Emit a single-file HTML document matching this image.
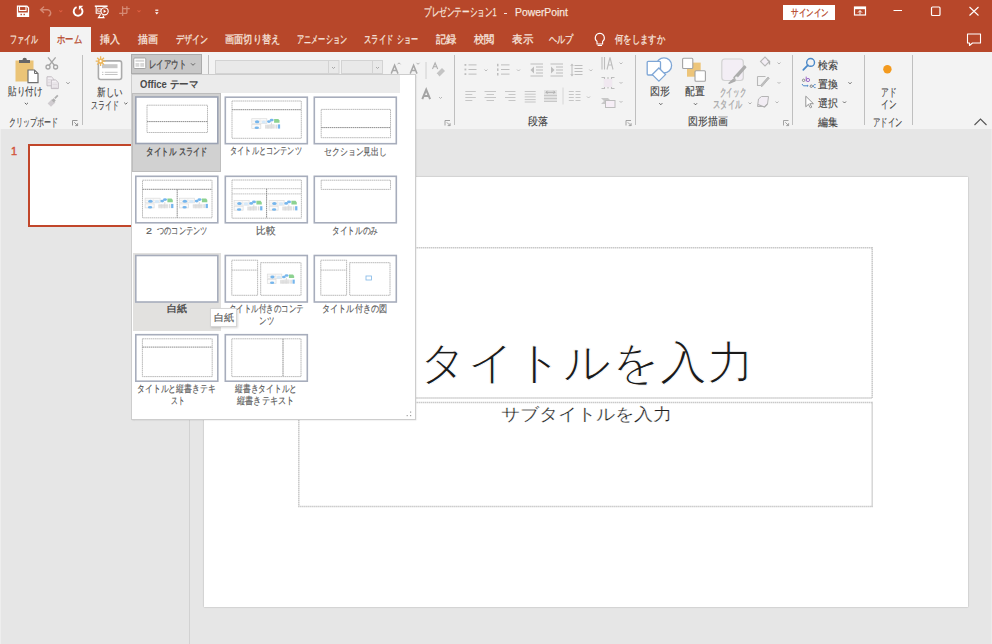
<!DOCTYPE html>
<html><head><meta charset="utf-8">
<style>
*{box-sizing:border-box;margin:0;padding:0}
html,body{width:992px;height:644px;overflow:hidden;background:#E6E6E6;font-family:"Liberation Sans",sans-serif;position:relative}
.a{position:absolute}
.t{position:absolute;white-space:nowrap;line-height:1;transform-origin:0 0}
svg{position:absolute;overflow:visible}
.tab{color:#F6E3DD;font-size:11px;top:33.5px;-webkit-text-stroke-width:0.3px}
.sep{position:absolute;width:1px;background:#BFBFBF}
.rt{color:#404040;font-size:10.5px;-webkit-text-stroke-width:0.12px}
.dis{color:#A8A8A8;-webkit-text-stroke-width:0.3px}
.frame{position:absolute;width:83px;height:47px;border:2px solid #AEB4C2;background:#fff}
.dot{position:absolute;border:1px dotted #8A8A8A}
.lbl{color:#5A5A5A;font-size:9.6px;-webkit-text-stroke-width:0.15px}
</style></head><body>
<!-- ========== TITLE BAR ========== -->
<div class="a" style="left:0;top:0;width:992px;height:52px;background:#B7472A"></div>

<!-- QAT icons -->
<svg style="left:0;top:0" width="180" height="26">
  <!-- save -->
  <path d="M17.5 6.2h9.5l1.5 1.5v8.6h-11z" fill="none" stroke="#fff" stroke-width="1.3"/>
  <rect x="19.5" y="6.5" width="6.5" height="4" fill="none" stroke="#fff" stroke-width="1.1"/>
  <rect x="17.5" y="12.5" width="11" height="4" fill="#fff"/>
  <rect x="20.5" y="13.8" width="1.4" height="1.4" fill="#B7472A"/><rect x="23.5" y="13.8" width="1.4" height="1.4" fill="#B7472A"/>
  <!-- undo faded -->
  <path d="M43.6 7l-3 2.8 3 2.8M40.8 9.8h7a3.2 3.2 0 0 1 1.2 6" fill="none" stroke="#D58A74" stroke-width="1.4" stroke-linecap="round"/>
  <path d="M59.3 10.3l1.5 1.5 1.5-1.5" fill="none" stroke="#DE5E40" stroke-width="1.1"/>
  <!-- repeat -->
  <path d="M76.6 7.2A4.4 4.4 0 1 0 81.2 8.2" fill="none" stroke="#fff" stroke-width="1.9"/>
  <path d="M78.9 5.8h4.4l-4.4 4.2z" fill="#fff"/>
  <!-- present -->
  <path d="M94.8 6.2h12.8" stroke="#fff" stroke-width="1.5"/>
  <path d="M96.2 6.8v6.4h4.5" fill="none" stroke="#fff" stroke-width="1.1"/>
  <rect x="97.8" y="8.8" width="3.2" height="2.4" fill="none" stroke="#fff" stroke-width="0.8"/>
  <circle cx="104.6" cy="11.3" r="3.6" fill="#B7472A" stroke="#fff" stroke-width="1.1"/>
  <path d="M103.6 9.6v3.4l2.6-1.7z" fill="#fff"/>
  <path d="M100.6 14.2l-2.2 3.4h5.6l-1.2-2.2" fill="none" stroke="#fff" stroke-width="1.1"/>
  <!-- touch faded -->
  <path d="M122.6 8.6h7.2M122.6 6.2v9.8M126.9 6.2v7.1M119.2 13.3h7.7" stroke="#D58A74" stroke-width="1.3" fill="none"/>
  <path d="M137.5 10.3l1.5 1.5 1.5-1.5" fill="none" stroke="#DE5E40" stroke-width="1.1"/>
  <!-- customize -->
  <path d="M155.3 10.2h3" stroke="#fff" stroke-width="1.2"/>
  <path d="M155 12.3h3.6l-1.8 2.2z" fill="#fff"/>
</svg>

<div class="t f" style="transform:scaleX(0.6337066375);left:424px;top:7px;font-size:11.5px;color:#F6E4DE;-webkit-text-stroke-width:0.25px">プレゼンテーション1</div>
<div class="a" style="left:503.8px;top:12.6px;width:3px;height:1.1px;background:#F6E4DE"></div>
<div class="t f" style="transform:scaleX(0.9011689692);left:514.5px;top:7.3px;font-size:11.5px;color:#F6E4DE;-webkit-text-stroke-width:0.25px">PowerPoint</div>

<!-- sign in -->
<div class="a" style="left:783px;top:5px;width:52px;height:15px;background:#fff"></div>
<div class="t f" style="transform:scaleX(0.7500000000);left:790.5px;top:8px;font-size:9.5px;color:#B7472A;-webkit-text-stroke-width:0.3px">サインイン</div>

<!-- window controls -->
<svg style="left:840px;top:0" width="152" height="52">
  <rect x="14.5" y="7" width="11" height="8" fill="none" stroke="#fff" stroke-width="1.2"/>
  <rect x="14.5" y="7" width="11" height="2.2" fill="#fff"/>
  <path d="M18 12.6l2-2 2 2M20 10.6v4" fill="none" stroke="#fff" stroke-width="1"/>
  <path d="M53.5 10.5h8.5" stroke="#fff" stroke-width="1"/>
  <rect x="91.5" y="7" width="8.5" height="8.5" rx="1" fill="none" stroke="#fff" stroke-width="1.2"/>
  <path d="M129.5 7l9 8.5M138.5 7l-9 8.5" stroke="#fff" stroke-width="1.1"/>
  <!-- comment -->
  <path d="M127.5 34h13v9h-8l-3 2.5v-2.5h-2z" fill="none" stroke="#fff" stroke-width="1.1" stroke-linejoin="round"/>
</svg>

<!-- tabs -->
<div class="a" style="left:50px;top:27px;width:41px;height:25px;background:#F3F3F3"></div>
<div class="t f tab" style="transform:scaleX(0.6363636364);left:10px">ファイル</div>
<div class="t f tab" style="transform:scaleX(0.7575757576);left:57px;color:#B7472A">ホーム</div>
<div class="t f tab" style="transform:scaleX(0.9090909091);left:100px">挿入</div>
<div class="t f tab" style="transform:scaleX(0.9090909091);left:138px">描画</div>
<div class="t f tab" style="transform:scaleX(0.7272727273);left:175.5px">デザイン</div>
<div class="t f tab" style="transform:scaleX(0.8333333333);left:225px">画面切り替え</div>
<div class="t f tab" style="transform:scaleX(0.6493506494);left:296.5px">アニメーション</div>
<div class="t f tab" style="transform:scaleX(0.6704545455);left:364px">スライド</div><div class="t f tab" style="transform:scaleX(0.6363636364);left:396.5px">ショー</div>
<div class="t f tab" style="transform:scaleX(0.9318181818);left:435.5px">記録</div>
<div class="t f tab" style="transform:scaleX(0.9318181818);left:473.5px">校閲</div>
<div class="t f tab" style="transform:scaleX(0.9545454545);left:511.5px">表示</div>
<div class="t f tab" style="transform:scaleX(0.7424242424);left:549px">ヘルプ</div>
<svg style="left:590px;top:30px" width="20" height="20">
  <path d="M9.8 3.2a4.6 4.6 0 0 0-2.8 8.2v2.6h5.6v-2.6a4.6 4.6 0 0 0-2.8-8.2z" fill="none" stroke="#fff" stroke-width="1.1"/>
  <path d="M7.6 15.5h4.4" stroke="#fff" stroke-width="1"/>
</svg>
<div class="t f tab" style="transform:scaleX(0.7575757576);left:615px">何をしますか</div>

<!-- ========== RIBBON ========== -->
<div class="a" style="left:0;top:52px;width:992px;height:77px;background:#F3F3F3"></div>

<!-- separators -->
<div class="sep" style="left:81.5px;top:55px;height:70px"></div>
<div class="sep" style="left:208px;top:55px;height:70px"></div>
<div class="sep" style="left:453.5px;top:55px;height:70px"></div>
<div class="sep" style="left:634.5px;top:55px;height:70px"></div>
<div class="sep" style="left:792px;top:55px;height:70px"></div>
<div class="sep" style="left:863.5px;top:55px;height:70px"></div>
<div class="sep" style="left:911.5px;top:55px;height:70px"></div>

<svg style="left:0;top:52px" width="992" height="77">
<g transform="translate(0,-52)">
  <!-- clipboard -->
  <rect x="15.5" y="60.5" width="18" height="21" fill="#EBC477"/>
  <path d="M19 63v-3h3.5a2.2 2.2 0 0 1 4.4 0h3.1v3z" fill="#666"/>
  <path d="M28 70h6.5l3.5 3.5v9.2h-10z" fill="#fff" stroke="#707070" stroke-width="1.2"/>
  <path d="M34.5 70v3.5h3.5" fill="none" stroke="#707070" stroke-width="1"/>
  <!-- scissors -->
  <g stroke="#A6A6A6" stroke-width="1.3" fill="none">
    <path d="M48 57.3l6.6 8.2M55.6 57.3l-6.6 8.2"/>
    <circle cx="48" cy="67" r="2"/><circle cx="55.6" cy="67" r="2"/>
  </g>
  <!-- copy -->
  <g stroke="#BCB6BC" stroke-width="0.9" fill="#F4F0F4">
    <path d="M47 76.8h4.4l2.4 2.4v6.6h-6.8z"/>
    <path d="M51.3 80h4.4l2.6 2.6v6h-7z"/>
  </g>
  <g stroke="#D2CCD2" stroke-width="0.6">
    <path d="M48 79.5h3.5M48 81h2.5M48 82.5h2.5M48 84h2.5M52.3 83h5M52.3 84.5h5M52.3 86h5M52.3 87.5h5"/>
  </g>
  <path d="M66.3 82.2l1.7 1.7 1.7-1.7" fill="none" stroke="#9A9A9A" stroke-width="1"/>
  <!-- painter -->
  <path d="M47.6 103.4l4.4-4.4 3.4 3.4-4.4 4.4z" fill="#D0CCD0"/>
  <path d="M51.6 100.2l2-2 2.2 2.2-2 2z" fill="#AFAFAF"/>
  <path d="M54.8 98.4l3-3" stroke="#AFAFAF" stroke-width="1.8"/>
  <!-- paste caret -->
  <path d="M24.8 102.8l1.6 1.6 1.6-1.6" fill="none" stroke="#666" stroke-width="1"/>
  <!-- launcher -->
  <g stroke="#8A8A8A" stroke-width="0.9" fill="none">
    <path d="M72.5 125.5v-5h5"/><path d="M74.3 122.3l3.3 3.3M77.6 123.2v2.4h-2.4"/>
  </g>

  <!-- new slide -->
  <rect x="98.4" y="60.9" width="23.2" height="18.6" rx="2.2" fill="#fff" stroke="#ABABAB" stroke-width="1.6"/>
  <rect x="102" y="64.2" width="15.5" height="4" fill="#C8C8C8"/>
  <path d="M102 72.3h1.4M104.8 72.3h12.8M102 74.5h1.4M104.8 74.5h12.8" stroke="#C4C4C4" stroke-width="1"/>
  <g stroke="#EDB75C" stroke-width="1.3">
    <path d="M100.6 56.3v9.8M95.7 61.2h9.8M97.2 57.8l6.8 6.8M104 57.8l-6.8 6.8"/>
  </g>
  <circle cx="100.6" cy="61.2" r="2.6" fill="#EDB75C"/>
  <circle cx="100.6" cy="61.2" r="1.1" fill="#fff"/>
  <path d="M124.2 102.6l1.6 1.6 1.6-1.6" fill="none" stroke="#666" stroke-width="1"/>

  <!-- font boxes -->
  <rect x="215.5" y="60.5" width="123.5" height="13" fill="#E9E9E9" stroke="#D3D3D3"/>
  <path d="M328.5 60.5v13" stroke="#D3D3D3"/>
  <path d="M332 67l1.5 1.5 1.5-1.5" fill="none" stroke="#A0A0A0" stroke-width="0.9"/>
  <rect x="341.5" y="60.5" width="41" height="13" fill="#E9E9E9" stroke="#D3D3D3"/>
  <path d="M372.5 60.5v13" stroke="#D3D3D3"/>
  <path d="M376 67l1.5 1.5 1.5-1.5" fill="none" stroke="#A0A0A0" stroke-width="0.9"/>
  <!-- grow/shrink A -->
  <g fill="none" stroke="#A8A8A8" stroke-width="1.5">
    <path d="M391.2 73.6l3.4-8.4 3.4 8.4M392.6 70.6h4"/>
    <path d="M410.2 73.6l3.4-8.4 3.4 8.4M411.6 70.6h4"/>
  </g>
  <path d="M397.5 64.3l1.5-1.5 1.5 1.5" fill="none" stroke="#A8A8A8" stroke-width="0.9"/>
  <path d="M416.5 62.8l1.5 1.5 1.5-1.5" fill="none" stroke="#A8A8A8" stroke-width="0.9"/>
  <path d="M426 62v17" stroke="#D0D0D0"/>
  <!-- clear formatting -->
  <path d="M432.5 69l2.6-6 2.6 6M433.5 66.8h3.2" fill="none" stroke="#B0B0B0" stroke-width="1.1"/>
  <path d="M436.5 73.5l5.5-5.5 3 3-5.5 5.5z" fill="#C4C4C4"/><path d="M436.5 73.5l2 2" stroke="#F3F3F3" stroke-width="0.8"/>
  <!-- font color A -->
  <path d="M422.3 99.2l3.9-9.6 3.9 9.6M423.6 96h5.2" fill="none" stroke="#A4A4A4" stroke-width="2"/>
  <path d="M439 97l1.5 1.5 1.5-1.5" fill="none" stroke="#B0B0B0" stroke-width="0.9"/>
  <g stroke="#9A9A9A" stroke-width="0.9" fill="none">
    <path d="M445 125.5v-5h5"/><path d="M446.8 122.3l3.3 3.3M450.1 123.2v2.4h-2.4"/>
  </g>

  <!-- paragraph -->
  <g fill="#BDBDBD">
    <rect x="464.5" y="64" width="1.8" height="1.8"/><rect x="464.5" y="68.6" width="1.8" height="1.8"/><rect x="464.5" y="73.2" width="1.8" height="1.8"/>
    <rect x="468.5" y="64.4" width="8" height="1"/><rect x="468.5" y="69" width="8" height="1"/><rect x="468.5" y="73.6" width="8" height="1"/>
    <rect x="497" y="63.8" width="1.5" height="2.5"/><rect x="497" y="68.4" width="1.5" height="2.5"/><rect x="497" y="73" width="1.5" height="2.5"/>
    <rect x="501" y="64.4" width="8.5" height="1"/><rect x="501" y="69" width="8.5" height="1"/><rect x="501" y="73.6" width="8.5" height="1"/>
  </g>
  <g fill="none" stroke="#BDBDBD" stroke-width="1">
    <path d="M484.5 69.5l1.5 1.5 1.5-1.5M517 69.5l1.5 1.5 1.5-1.5M589.3 69.5l1.5 1.5 1.5-1.5"/>
    <path d="M619.5 62.5l1.5 1.5 1.5-1.5M619.5 82l1.5 1.5 1.5-1.5M619.5 101l1.5 1.5 1.5-1.5"/>
    <path d="M587 96.5l1.5 1.5 1.5-1.5"/>
  </g>
  <!-- indents -->
  <g fill="#BDBDBD">
    <rect x="530.5" y="63.5" width="12.5" height="1"/><rect x="536" y="66.5" width="7" height="1"/><rect x="536" y="69.5" width="7" height="1"/><rect x="536" y="72.5" width="7" height="1"/><rect x="530.5" y="75.5" width="12.5" height="1"/>
    <path d="M530.5 70l3.5-3.5v7z"/>
    <rect x="550.5" y="63.5" width="12.5" height="1"/><rect x="556" y="66.5" width="7" height="1"/><rect x="556" y="69.5" width="7" height="1"/><rect x="556" y="72.5" width="7" height="1"/><rect x="550.5" y="75.5" width="12.5" height="1"/>
    <path d="M554.5 70l-3.5-3.5v7z"/>
    <rect x="574.5" y="65" width="8" height="1"/><rect x="574.5" y="68" width="8" height="1"/><rect x="574.5" y="71" width="8" height="1"/><rect x="574.5" y="74" width="8" height="1"/>
    <path d="M572 63.5l-1.8 2.3h3.6zM572 76.5l-1.8-2.3h3.6z"/><rect x="571.5" y="65.5" width="1" height="9"/>
  </g>
  <!-- align row -->
  <g fill="#C6C6C6">
    <rect x="465.3" y="91" width="10.5" height="1"/><rect x="465.3" y="94" width="7" height="1"/><rect x="465.3" y="97" width="10.5" height="1"/><rect x="465.3" y="100" width="7" height="1"/>
    <rect x="484.5" y="91" width="11.5" height="1"/><rect x="486.5" y="94" width="7.5" height="1"/><rect x="484.5" y="97" width="11.5" height="1"/><rect x="486.5" y="100" width="7.5" height="1"/>
    <rect x="505" y="91" width="10.5" height="1"/><rect x="508.5" y="94" width="7" height="1"/><rect x="505" y="97" width="10.5" height="1"/><rect x="508.5" y="100" width="7" height="1"/>
    <rect x="524.7" y="91" width="11" height="1"/><rect x="524.7" y="93.7" width="11" height="1"/><rect x="524.7" y="96.4" width="11" height="1"/><rect x="524.7" y="99.1" width="11" height="1"/><rect x="524.7" y="101.5" width="11" height="1"/>
    <rect x="544" y="90" width="13" height="12" fill="#E2E2E2"/><rect x="544" y="95" width="13" height="1" fill="#C8C8C8"/><rect x="544" y="98" width="13" height="1" fill="#C8C8C8"/><rect x="544" y="101" width="13" height="1" fill="#C8C8C8"/>
    <rect x="568.8" y="91" width="5" height="1"/><rect x="575.5" y="91" width="5" height="1"/><rect x="568.8" y="94" width="5" height="1"/><rect x="575.5" y="94" width="5" height="1"/><rect x="568.8" y="97" width="5" height="1"/><rect x="575.5" y="97" width="5" height="1"/><rect x="568.8" y="100" width="5" height="1"/><rect x="575.5" y="100" width="5" height="1"/>
  </g>
  <path d="M546 92.3h9M546 92.3l1.5-1.5M546 92.3l1.5 1.5M555 92.3l-1.5-1.5M555 92.3l-1.5 1.5" stroke="#A8A8A8" stroke-width="0.9" fill="none"/>
  <path d="M563 87.5v17" stroke="#D6D6D6"/>
  <!-- right column -->
  <g fill="none" stroke="#BDBDBD" stroke-width="1.1">
    <path d="M602 57v12.5M604.5 57v12.5M607 69.5l3-12 3 12M608 65h4"/>
    <path d="M601.5 77.5h3v11h-3M614.5 77.5h-3v11h3"/>
    <path d="M608 77v11.5"/>
  </g>
  <rect x="604" y="79" width="8" height="8" fill="#F0E8F0"/>
  <path d="M601 98h7l3 3-3 3h-7l3-3z" fill="#C8C8C8"/>
  <rect x="605.5" y="100.5" width="9.5" height="7" fill="#F6EEF6" stroke="#BDBDBD"/>
  <g stroke="#9A9A9A" stroke-width="0.9" fill="none">
    <path d="M626 125.5v-5h5"/><path d="M627.8 122.3l3.3 3.3M631.1 123.2v2.4h-2.4"/>
  </g>

  <!-- drawing: shapes -->
  <g fill="#fff" stroke="#7EA6D6" stroke-width="1.3">
    <circle cx="664" cy="65.4" r="7.6"/>
    <rect x="647.2" y="61.3" width="13.3" height="13.7" rx="1"/>
    <path d="M658.9 68l6.6 6.6-6.6 6.6-6.6-6.6z"/>
  </g>
  <path d="M659.3 103.2l1.5 1.5 1.5-1.5" fill="none" stroke="#555" stroke-width="1"/>
  <!-- arrange -->
  <rect x="687" y="62.6" width="13.7" height="14.1" fill="#EDC57A"/>
  <rect x="682.6" y="58.3" width="10.2" height="10.2" rx="1" fill="#fff" stroke="#A2A2A2" stroke-width="1.1"/>
  <rect x="695" y="70.8" width="10.4" height="10.4" rx="1" fill="#fff" stroke="#A2A2A2" stroke-width="1.1"/>
  <path d="M694 103.3l1.5 1.5 1.5-1.5" fill="none" stroke="#555" stroke-width="1"/>
  <!-- quick styles -->
  <rect x="721.8" y="59" width="21.5" height="21.5" rx="3" fill="#F3EEF5" stroke="#D2D2D2" stroke-width="1.2"/>
  <path d="M729 83.2l4.5-4 1.5 1.5zM734 77.5l10.5-11.5 1.2 1.2-10.2 11.8z" fill="#ADADAD" stroke="#ADADAD" stroke-width="1.5" stroke-linejoin="round"/>
  <circle cx="736.5" cy="78" r="1.4" fill="#F3F3F3"/>
  <path d="M748.5 102.5l1.5 1.5 1.5-1.5" fill="none" stroke="#B0B0B0" stroke-width="1"/>
  <!-- fill/outline/effects -->
  <path d="M760.5 61.5l4.5-4.5 4.5 4.5-4.5 4.5z" fill="#F3EEF5" stroke="#B8B8B8" stroke-width="1.1"/>
  <path d="M767.5 60l2 1.5v3" fill="none" stroke="#B0B0B0" stroke-width="1.3"/>
  <path d="M757.5 76.5h8M757.5 76.5v9h3" fill="none" stroke="#B8B8B8" stroke-width="1.1"/>
  <path d="M760.5 85.5l7.5-8.5 1.3 1.2-7.5 8.5z" fill="#C0C0C0" stroke="#B0B0B0" stroke-width="0.8"/>
  <path d="M758.5 99l3-2.5h7l-1 7.5-3 2.5h-7z" fill="#F2EDF4" stroke="#B4B4B4" stroke-width="1"/>
  <path d="M758 104.5l6.5 2.5 3-3" fill="none" stroke="#B0B0B0" stroke-width="1.2"/>
  <g fill="none" stroke="#B8B8B8" stroke-width="1">
    <path d="M777.5 62.5l1.5 1.5 1.5-1.5M777.5 82l1.5 1.5 1.5-1.5M775.5 101.5l1.5 1.5 1.5-1.5"/>
  </g>
  <g stroke="#9A9A9A" stroke-width="0.9" fill="none">
    <path d="M783.5 125.5v-5h5"/><path d="M785.3 122.3l3.3 3.3M788.6 123.2v2.4h-2.4"/>
  </g>

  <!-- editing -->
  <circle cx="810.6" cy="62.4" r="3.9" fill="none" stroke="#4A88C8" stroke-width="1.4"/>
  <path d="M807.9 65.2l-4.6 4.6" stroke="#4A88C8" stroke-width="1.7" stroke-linecap="round"/>
  <circle cx="803.6" cy="80.3" r="1.2" fill="none" stroke="#777" stroke-width="0.8"/>
  <path d="M806.2 76.6v4.8" stroke="#9E6BC8" stroke-width="1"/><circle cx="808" cy="80" r="1.6" fill="none" stroke="#9E6BC8" stroke-width="1"/>
  <path d="M802 84l1.4 1.8h4.2" fill="none" stroke="#4A88C8" stroke-width="1"/><path d="M807.2 84.6l1.4 1.2-1.4 1.2z" fill="#4A88C8"/>
  <circle cx="811.3" cy="86.2" r="1.2" fill="none" stroke="#666" stroke-width="0.8"/>
  <path d="M815.6 84.6a1.6 1.6 0 1 0 0 3" fill="none" stroke="#4A88C8" stroke-width="1"/>
  <path d="M805.8 96.2v10.6l2.6-2.5 2 3.6 1.4-.8-2-3.4h3.6z" fill="#fff" stroke="#8A8A8A" stroke-width="0.9" stroke-linejoin="round"/>
  <path d="M848.5 82.3l1.5 1.5 1.5-1.5M843 101.5l1.5 1.5 1.5-1.5" fill="none" stroke="#666" stroke-width="1"/>

  <!-- addin -->
  <circle cx="887.4" cy="69.3" r="4.2" fill="#F39A1E"/>
  <!-- collapse -->
  <path d="M974.5 125l6-6 6 6" fill="none" stroke="#555" stroke-width="1.1"/>
</g>
</svg>

<!-- ribbon text -->
<div class="t f rt" style="transform:scaleX(0.7727272727);left:7.5px;top:86px">貼り付け</div>
<div class="t f rt" style="transform:scaleX(0.6363636364);left:8.5px;top:117px">クリップボード</div>
<div class="t f rt" style="transform:scaleX(0.7727272727);left:97px;top:87px">新しい</div>
<div class="t f rt" style="transform:scaleX(0.6363636364);left:90.5px;top:99.5px">スライド</div>
<div class="t f rt" style="transform:scaleX(0.9090909091);left:527.5px;top:116px">段落</div>
<div class="t f rt" style="transform:scaleX(0.9090909091);left:649.5px;top:86px">図形</div>
<div class="t f rt" style="transform:scaleX(0.8863636364);left:684.5px;top:86px">配置</div>
<div class="t f rt dis" style="transform:scaleX(0.5909090909);left:720px;top:87px">クイック</div>
<div class="t f rt dis" style="transform:scaleX(0.6590909091);left:713px;top:99px">スタイル</div>
<div class="t f rt" style="transform:scaleX(0.8977272727);left:687.5px;top:116px">図形描画</div>
<div class="t f rt" style="transform:scaleX(0.9090909091);left:818px;top:59.5px">検索</div>
<div class="t f rt" style="transform:scaleX(0.9090909091);left:818px;top:78.5px">置換</div>
<div class="t f rt" style="transform:scaleX(0.9090909091);left:818px;top:98px">選択</div>
<div class="t f rt" style="transform:scaleX(0.9090909091);left:818px;top:116.5px">編集</div>
<div class="t f rt" style="transform:scaleX(0.7045454545);left:880.5px;top:87px">アド</div>
<div class="t f rt" style="transform:scaleX(0.7045454545);left:880.5px;top:99px">イン</div>
<div class="t f rt" style="transform:scaleX(0.6704545455);left:872.5px;top:116.5px">アドイン</div>
<div class="t f" style="transform:scaleX(NaN);left:421.5px;top:88px;font-size:13px;color:#A8A8A8;display:none">A</div>


<!-- ========== LEFT PANE ========== -->
<div class="a" style="left:0;top:129px;width:1px;height:515px;background:#EEEEEE"></div>
<div class="a" style="left:189px;top:129px;width:1px;height:515px;background:#D2D2D2"></div>
<div class="t" style="left:11px;top:145.5px;font-size:11px;color:#D2553A;-webkit-text-stroke-width:0.4px">1</div>
<div class="a" style="left:28px;top:144px;width:150px;height:83px;border:2px solid #C1462A;background:#fff"></div>

<!-- ========== SLIDE ========== -->
<div class="a" style="left:991px;top:129px;width:1px;height:515px;background:#EBEBEB"></div>
<div class="a" style="left:203.5px;top:177px;width:764.5px;height:430px;background:#fff;box-shadow:0 0 1.5px rgba(0,0,0,0.3)"></div>
<svg style="left:0;top:0" width="992" height="644"><g fill="none" stroke="#C9C9C9" stroke-width="1.5" stroke-dasharray="1.5 0.5">
<rect x="298.8" y="247.8" width="573.4" height="150.2"/>
<rect x="298.8" y="402.6" width="573.4" height="104"/>
</g></svg>
<div class="t f" style="transform:scaleX(1.0468750000);left:419px;top:339.5px;font-size:45px;color:#1A1A1A;-webkit-text-stroke:1px #fff">タイトルを入力</div>
<div class="t f" style="transform:scaleX(1.1209150327);left:501px;top:405.5px;font-size:17px;color:#1E1E1E;-webkit-text-stroke:0.25px #fff">サブタイトルを入力</div>

<!-- ========== DROPDOWN ========== -->
<!-- layout button -->
<div class="a" style="left:131px;top:54px;width:71px;height:19.5px;background:#C8C8C8;border:1px solid #ABABAB"></div>
<svg style="left:0;top:0" width="210" height="80">
  <rect x="133.8" y="58" width="12" height="10.5" rx="1" fill="#fff" stroke="#9C9C9C" stroke-width="0.9"/>
  <rect x="135.5" y="59.8" width="8.6" height="2" fill="#D8D8D8"/>
  <rect x="135.5" y="63" width="3.8" height="3.8" fill="#D8D8D8"/>
  <rect x="140.3" y="63" width="3.8" height="3.8" fill="#D8D8D8"/>
  <path d="M191 63.3l2 2 2-2" fill="none" stroke="#666" stroke-width="1"/>
</svg>
<div class="t f" style="transform:scaleX(0.6727272727);left:149px;top:59px;font-size:10.5px;color:#404040;-webkit-text-stroke-width:0.25px">レイアウト</div>

<!-- panel -->
<div class="a" style="left:131px;top:73.5px;width:285px;height:346px;background:#fff;border:1px solid #CDCDCD;box-shadow:0.5px 0.5px 1.5px rgba(0,0,0,0.16)"></div>
<div class="a" style="left:132px;top:74.5px;width:268px;height:18px;background:#EBEBEB"></div>
<div class="t f" style="transform:scaleX(0.8626539624);left:140px;top:78.5px;font-size:11px;font-weight:bold;color:#4A4A4A">Office テーマ</div>

<!-- selected & hover bgs -->
<div class="a" style="left:132px;top:93px;width:89px;height:79px;background:#D1D1D1;border:1px solid #BDBDBD"></div>
<div class="a" style="left:132.5px;top:252.5px;width:88.5px;height:78px;background:#E2E1DF"></div>

<svg style="left:0;top:0" width="420" height="420">
  
  <g fill="#fff" stroke="#A7ADBC" stroke-width="1.6">
    <rect x="135.8" y="97" width="82" height="46.5" stroke="#9CA3B4"/>
    <rect x="225.3" y="97.2" width="82" height="46.5"/>
    <rect x="314.3" y="97.2" width="82" height="46.5"/>
    <rect x="135.8" y="176.3" width="82" height="46.5"/>
    <rect x="225.3" y="176.3" width="82" height="46.5"/>
    <rect x="314.3" y="176.3" width="82" height="46.5"/>
    <rect x="135.8" y="255.5" width="82" height="46.5"/>
    <rect x="225.3" y="255.5" width="82" height="46.5"/>
    <rect x="314.3" y="255.5" width="82" height="46.5"/>
    <rect x="135.8" y="334.7" width="82" height="46.5"/>
    <rect x="225.3" y="334.7" width="82" height="46.5"/>
  </g>
  <g fill="none" stroke="#B2B2B2" stroke-width="0.9" stroke-dasharray="1.6 0.5">
    <!-- title slide -->
    <rect x="147" y="105.2" width="60.5" height="27.3"/>
    <path d="M147 121.6h60.5" stroke-width="1" stroke="#8E8E8E"/>
    <!-- title & content -->
    <rect x="232" y="101" width="69.3" height="37.3"/>
    <path d="M232 109.7h69.3" stroke-width="1" stroke="#8E8E8E"/>
    <!-- section -->
    <rect x="321.2" y="109.4" width="69.3" height="28.3"/>
    <path d="M321.2 127.6h69.3" stroke-width="1" stroke="#8E8E8E"/>
    <!-- two content -->
    <rect x="142.5" y="180.2" width="69.5" height="37.6"/>
    <path d="M142.5 189.3h69.5" stroke-width="1" stroke="#8E8E8E"/>
    <path d="M177.2 189.3v28.5" stroke-width="1" stroke="#8E8E8E"/>
    <!-- comparison -->
    <rect x="232" y="180" width="69.4" height="38.2"/>
    <path d="M232 188.7h69.4M232 193.9h69.4" stroke-width="1" stroke="#C4C4C4"/>
    <path d="M266.6 188.7v29.5" stroke-width="1" stroke="#8E8E8E"/>
    <!-- title only -->
    <rect x="321.2" y="180.2" width="69.3" height="9.2"/>
    <!-- content w caption -->
    <rect x="231.8" y="260.2" width="25.8" height="35.1"/>
    <path d="M231.8 270.1h25.8"/>
    <rect x="260.7" y="262.7" width="40.3" height="32.6"/>
    <!-- picture w caption -->
    <rect x="320.8" y="260.2" width="25.8" height="35.1"/>
    <path d="M320.8 270.1h25.8"/>
    <rect x="349.7" y="262.7" width="40.3" height="32.6"/>
    <!-- title & vertical -->
    <rect x="142.4" y="338.8" width="69.8" height="37.8"/>
    <path d="M142.4 347.1h69.8" stroke-width="1" stroke="#8E8E8E"/>
    <!-- vertical title -->
    <rect x="231.8" y="338.8" width="69.2" height="37.8"/>
    <path d="M283 338.8v37.8" stroke-width="1" stroke="#8E8E8E"/>
  </g>
  <g transform="translate(251.5,118.4)" opacity="0.85">
      <rect x="0.3" y="0.3" width="15" height="4.6" fill="#FAFAFA" stroke="#D6D6D6" stroke-width="0.7"/>
      <path d="M0.5 2.6h15M8.5 0.3v4.6" stroke="#E2E2E2" stroke-width="0.6"/>
      <ellipse cx="5.6" cy="3.3" rx="2.2" ry="1.5" fill="#5FAAEA"/>
      <ellipse cx="12.2" cy="3.6" rx="2.2" ry="1.6" fill="#CFE6F8"/>
      <ellipse cx="17.4" cy="3.2" rx="1.9" ry="1.3" fill="#5FAAEA"/>
      <ellipse cx="20.2" cy="1.7" rx="2" ry="1.3" fill="#5FAAEA"/>
      <path d="M20 4.2v2.5M18 6.5h5" stroke="#C8C8C8" stroke-width="0.7"/>
      <path d="M22.6 0.6h4.2l1.2 1.6v2.2h-5.4z" fill="#7ACB7E"/>
      <rect x="0.3" y="6" width="9" height="4" fill="#FAFAFA" stroke="#D6D6D6" stroke-width="0.7"/>
      <ellipse cx="5.3" cy="9.3" rx="2.2" ry="1.3" fill="#5FAAEA"/>
      <rect x="13.5" y="6.2" width="9.7" height="4.2" fill="#E4E4E4"/>
      <path d="M13.5 7.6h9.7M13.5 9h9.7M16.5 6.2v4.2M19.7 6.2v4.2" stroke="#CFCFCF" stroke-width="0.5"/>
      <rect x="24" y="6.2" width="1.6" height="4" fill="#D8D8D8"/>
      <rect x="26.3" y="6" width="2.3" height="4.2" fill="#5FAAEA"/>
    </g>
  <g transform="translate(144.8,197.9)" opacity="0.85">
      <rect x="0.3" y="0.3" width="15" height="4.6" fill="#FAFAFA" stroke="#D6D6D6" stroke-width="0.7"/>
      <path d="M0.5 2.6h15M8.5 0.3v4.6" stroke="#E2E2E2" stroke-width="0.6"/>
      <ellipse cx="5.6" cy="3.3" rx="2.2" ry="1.5" fill="#5FAAEA"/>
      <ellipse cx="12.2" cy="3.6" rx="2.2" ry="1.6" fill="#CFE6F8"/>
      <ellipse cx="17.4" cy="3.2" rx="1.9" ry="1.3" fill="#5FAAEA"/>
      <ellipse cx="20.2" cy="1.7" rx="2" ry="1.3" fill="#5FAAEA"/>
      <path d="M20 4.2v2.5M18 6.5h5" stroke="#C8C8C8" stroke-width="0.7"/>
      <path d="M22.6 0.6h4.2l1.2 1.6v2.2h-5.4z" fill="#7ACB7E"/>
      <rect x="0.3" y="6" width="9" height="4" fill="#FAFAFA" stroke="#D6D6D6" stroke-width="0.7"/>
      <ellipse cx="5.3" cy="9.3" rx="2.2" ry="1.3" fill="#5FAAEA"/>
      <rect x="13.5" y="6.2" width="9.7" height="4.2" fill="#E4E4E4"/>
      <path d="M13.5 7.6h9.7M13.5 9h9.7M16.5 6.2v4.2M19.7 6.2v4.2" stroke="#CFCFCF" stroke-width="0.5"/>
      <rect x="24" y="6.2" width="1.6" height="4" fill="#D8D8D8"/>
      <rect x="26.3" y="6" width="2.3" height="4.2" fill="#5FAAEA"/>
    </g>
  <g transform="translate(179.3,197.9)" opacity="0.85">
      <rect x="0.3" y="0.3" width="15" height="4.6" fill="#FAFAFA" stroke="#D6D6D6" stroke-width="0.7"/>
      <path d="M0.5 2.6h15M8.5 0.3v4.6" stroke="#E2E2E2" stroke-width="0.6"/>
      <ellipse cx="5.6" cy="3.3" rx="2.2" ry="1.5" fill="#5FAAEA"/>
      <ellipse cx="12.2" cy="3.6" rx="2.2" ry="1.6" fill="#CFE6F8"/>
      <ellipse cx="17.4" cy="3.2" rx="1.9" ry="1.3" fill="#5FAAEA"/>
      <ellipse cx="20.2" cy="1.7" rx="2" ry="1.3" fill="#5FAAEA"/>
      <path d="M20 4.2v2.5M18 6.5h5" stroke="#C8C8C8" stroke-width="0.7"/>
      <path d="M22.6 0.6h4.2l1.2 1.6v2.2h-5.4z" fill="#7ACB7E"/>
      <rect x="0.3" y="6" width="9" height="4" fill="#FAFAFA" stroke="#D6D6D6" stroke-width="0.7"/>
      <ellipse cx="5.3" cy="9.3" rx="2.2" ry="1.3" fill="#5FAAEA"/>
      <rect x="13.5" y="6.2" width="9.7" height="4.2" fill="#E4E4E4"/>
      <path d="M13.5 7.6h9.7M13.5 9h9.7M16.5 6.2v4.2M19.7 6.2v4.2" stroke="#CFCFCF" stroke-width="0.5"/>
      <rect x="24" y="6.2" width="1.6" height="4" fill="#D8D8D8"/>
      <rect x="26.3" y="6" width="2.3" height="4.2" fill="#5FAAEA"/>
    </g>
  <g transform="translate(233.8,200.2)" opacity="0.85">
      <rect x="0.3" y="0.3" width="15" height="4.6" fill="#FAFAFA" stroke="#D6D6D6" stroke-width="0.7"/>
      <path d="M0.5 2.6h15M8.5 0.3v4.6" stroke="#E2E2E2" stroke-width="0.6"/>
      <ellipse cx="5.6" cy="3.3" rx="2.2" ry="1.5" fill="#5FAAEA"/>
      <ellipse cx="12.2" cy="3.6" rx="2.2" ry="1.6" fill="#CFE6F8"/>
      <ellipse cx="17.4" cy="3.2" rx="1.9" ry="1.3" fill="#5FAAEA"/>
      <ellipse cx="20.2" cy="1.7" rx="2" ry="1.3" fill="#5FAAEA"/>
      <path d="M20 4.2v2.5M18 6.5h5" stroke="#C8C8C8" stroke-width="0.7"/>
      <path d="M22.6 0.6h4.2l1.2 1.6v2.2h-5.4z" fill="#7ACB7E"/>
      <rect x="0.3" y="6" width="9" height="4" fill="#FAFAFA" stroke="#D6D6D6" stroke-width="0.7"/>
      <ellipse cx="5.3" cy="9.3" rx="2.2" ry="1.3" fill="#5FAAEA"/>
      <rect x="13.5" y="6.2" width="9.7" height="4.2" fill="#E4E4E4"/>
      <path d="M13.5 7.6h9.7M13.5 9h9.7M16.5 6.2v4.2M19.7 6.2v4.2" stroke="#CFCFCF" stroke-width="0.5"/>
      <rect x="24" y="6.2" width="1.6" height="4" fill="#D8D8D8"/>
      <rect x="26.3" y="6" width="2.3" height="4.2" fill="#5FAAEA"/>
    </g>
  <g transform="translate(268.8,200.2)" opacity="0.85">
      <rect x="0.3" y="0.3" width="15" height="4.6" fill="#FAFAFA" stroke="#D6D6D6" stroke-width="0.7"/>
      <path d="M0.5 2.6h15M8.5 0.3v4.6" stroke="#E2E2E2" stroke-width="0.6"/>
      <ellipse cx="5.6" cy="3.3" rx="2.2" ry="1.5" fill="#5FAAEA"/>
      <ellipse cx="12.2" cy="3.6" rx="2.2" ry="1.6" fill="#CFE6F8"/>
      <ellipse cx="17.4" cy="3.2" rx="1.9" ry="1.3" fill="#5FAAEA"/>
      <ellipse cx="20.2" cy="1.7" rx="2" ry="1.3" fill="#5FAAEA"/>
      <path d="M20 4.2v2.5M18 6.5h5" stroke="#C8C8C8" stroke-width="0.7"/>
      <path d="M22.6 0.6h4.2l1.2 1.6v2.2h-5.4z" fill="#7ACB7E"/>
      <rect x="0.3" y="6" width="9" height="4" fill="#FAFAFA" stroke="#D6D6D6" stroke-width="0.7"/>
      <ellipse cx="5.3" cy="9.3" rx="2.2" ry="1.3" fill="#5FAAEA"/>
      <rect x="13.5" y="6.2" width="9.7" height="4.2" fill="#E4E4E4"/>
      <path d="M13.5 7.6h9.7M13.5 9h9.7M16.5 6.2v4.2M19.7 6.2v4.2" stroke="#CFCFCF" stroke-width="0.5"/>
      <rect x="24" y="6.2" width="1.6" height="4" fill="#D8D8D8"/>
      <rect x="26.3" y="6" width="2.3" height="4.2" fill="#5FAAEA"/>
    </g>
  <g transform="translate(267,273.8) scale(0.97)" opacity="0.85">
      <rect x="0.3" y="0.3" width="15" height="4.6" fill="#FAFAFA" stroke="#D6D6D6" stroke-width="0.7"/>
      <path d="M0.5 2.6h15M8.5 0.3v4.6" stroke="#E2E2E2" stroke-width="0.6"/>
      <ellipse cx="5.6" cy="3.3" rx="2.2" ry="1.5" fill="#5FAAEA"/>
      <ellipse cx="12.2" cy="3.6" rx="2.2" ry="1.6" fill="#CFE6F8"/>
      <ellipse cx="17.4" cy="3.2" rx="1.9" ry="1.3" fill="#5FAAEA"/>
      <ellipse cx="20.2" cy="1.7" rx="2" ry="1.3" fill="#5FAAEA"/>
      <path d="M20 4.2v2.5M18 6.5h5" stroke="#C8C8C8" stroke-width="0.7"/>
      <path d="M22.6 0.6h4.2l1.2 1.6v2.2h-5.4z" fill="#7ACB7E"/>
      <rect x="0.3" y="6" width="9" height="4" fill="#FAFAFA" stroke="#D6D6D6" stroke-width="0.7"/>
      <ellipse cx="5.3" cy="9.3" rx="2.2" ry="1.3" fill="#5FAAEA"/>
      <rect x="13.5" y="6.2" width="9.7" height="4.2" fill="#E4E4E4"/>
      <path d="M13.5 7.6h9.7M13.5 9h9.7M16.5 6.2v4.2M19.7 6.2v4.2" stroke="#CFCFCF" stroke-width="0.5"/>
      <rect x="24" y="6.2" width="1.6" height="4" fill="#D8D8D8"/>
      <rect x="26.3" y="6" width="2.3" height="4.2" fill="#5FAAEA"/>
    </g>
  <!-- picture icon -->
  <rect x="366" y="276" width="5.5" height="4" fill="none" stroke="#7FB6E6" stroke-width="0.8"/>
  <!-- resize grip -->
  <g fill="#A0A0A0">
    <rect x="410" y="411.5" width="1.2" height="1.2"/><rect x="410" y="415" width="1.2" height="1.2"/><rect x="406.6" y="415" width="1.2" height="1.2"/>
  </g>
</svg>

<!-- labels -->
<div class="t f" style="transform:scaleX(0.7500000000);left:146px;top:146.5px;font-size:10px;color:#444;-webkit-text-stroke-width:0.3px">タイトル</div><div class="t f" style="transform:scaleX(0.7125000000);left:179px;top:146.5px;font-size:10px;color:#444;-webkit-text-stroke-width:0.3px">スライド</div>
<div class="t f lbl" style="transform:scaleX(0.7170000000);left:229.7px;top:146px">タイトルとコンテンツ</div>
<div class="t f lbl" style="transform:scaleX(0.7875000000);left:324px;top:146.5px">セクション見出し</div>
<div class="t f lbl" style="transform:scaleX(1.1228070175);left:146px;top:225.5px">2</div><div class="t f lbl" style="transform:scaleX(0.7214285714);left:156.5px;top:225.5px">つのコンテンツ</div>
<div class="t f lbl" style="transform:scaleX(0.9750000000);left:256px;top:225.5px">比較</div>
<div class="t f lbl" style="transform:scaleX(0.7666666667);left:331.6px;top:225.5px">タイトルのみ</div>
<div class="t f" style="transform:scaleX(0.9900000000);left:167px;top:304px;font-size:10px;color:#444;-webkit-text-stroke-width:0.3px">白紙</div>
<div class="t f lbl" style="transform:scaleX(0.7450000000);left:228.7px;top:304px">タイトル付きのコンテ</div>
<div class="t f lbl" style="transform:scaleX(0.7500000000);left:258.8px;top:315.5px">ンツ</div>
<div class="t f lbl" style="transform:scaleX(0.8125000000);left:322px;top:304px">タイトル付きの図</div>
<div class="t f lbl" style="transform:scaleX(0.7870000000);left:137px;top:383.5px">タイトルと縦書きテキ</div>
<div class="t f lbl" style="transform:scaleX(0.6850000000);left:170.6px;top:396px">スト</div>
<div class="t f lbl" style="transform:scaleX(0.7750000000);left:235px;top:383.5px">縦書きタイトルと</div>
<div class="t f lbl" style="transform:scaleX(0.8214285714);left:237px;top:396px">縦書きテキスト</div>

<!-- tooltip -->
<div class="a" style="left:210px;top:307.5px;width:27px;height:19.5px;background:#fff;border:1px solid #D6D6D6;box-shadow:1px 1px 2px rgba(0,0,0,0.15)"></div>
<div class="t f lbl" style="transform:scaleX(1.0000000000);left:214px;top:313px">白紙</div>



</body></html>
